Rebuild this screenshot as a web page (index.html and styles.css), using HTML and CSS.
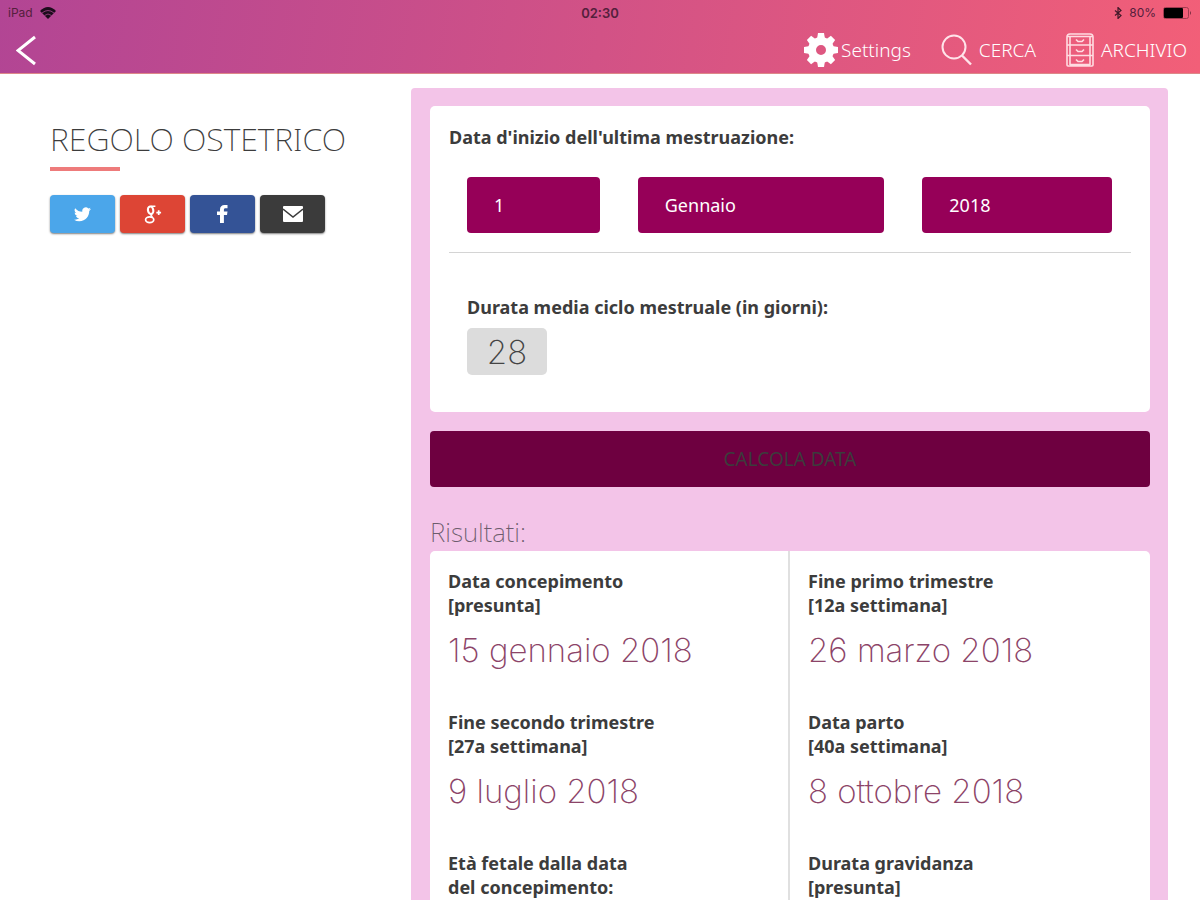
FILE: index.html
```html
<!DOCTYPE html>
<html lang="it">
<head>
    <meta charset="UTF-8">
    <meta name="viewport" content="width=device-width, initial-scale=1.0">
    <title>Regolo ostetrico</title>
    <link rel="stylesheet" href="styles.css">
</head>
<body>
    <header class="topbar">
        <div class="status">
            <div class="status-left">
                <span>iPad</span>
                <svg width="16" height="12" viewBox="0 0 16 12"><path d="M0 4Q8-4 16 4L8 12Z" fill="#1c0c1c"/><path d="M2 6Q8 1 14 6M4.500 8.500Q8 5.500 11.500 8.500" fill="none" stroke="#a8448c" stroke-width="0.800"/></svg>
            </div>
            <div class="status-time">02:30</div>
            <div class="status-right">
                <svg width="8" height="12" viewBox="0 0 8 12"><path d="M1 3.500L7 8.500L4 11.500V0.500L7 3.500L1 8.500" fill="none" stroke="#401828" stroke-width="1.200"/></svg>
                <span>80%</span>
                <svg width="29" height="12" viewBox="0 0 29 12"><rect x="0.500" y="0.500" width="25" height="11" rx="2" fill="none" stroke="#a03c50"/><rect x="1" y="1" width="19" height="10" rx="1" fill="#000"/><path d="M27 4V8Q29 6 27 4" fill="#7c2c40"/></svg>
            </div>
        </div>
        <nav class="nav">
            <a class="back" href="#" aria-label="Indietro">
                <svg width="22" height="32" viewBox="0 0 22 32"><path d="M19 3L2 16.500L19 30" fill="none" stroke="#fff" stroke-width="3"/></svg>
            </a>
            <a class="nav-link settings" href="#">
                <svg width="36" height="36" viewBox="-18 -18 36 36">
                    <circle r="9" fill="none" stroke="#fff" stroke-width="8"/>
                    <g fill="#fff">
                        <path id="tooth" d="M-4-11L-3-17H3L4-11Z"/>
                        <use href="#tooth" transform="rotate(45)"/>
                        <use href="#tooth" transform="rotate(90)"/>
                        <use href="#tooth" transform="rotate(135)"/>
                        <use href="#tooth" transform="rotate(180)"/>
                        <use href="#tooth" transform="rotate(225)"/>
                        <use href="#tooth" transform="rotate(270)"/>
                        <use href="#tooth" transform="rotate(315)"/>
                    </g>
                </svg>
                <span>Settings</span>
            </a>
            <a class="nav-link search" href="#">
                <svg width="31" height="32" viewBox="0 0 31 32"><circle cx="13" cy="13" r="11.500" fill="none" stroke="#ffe4ea" stroke-width="2"/><path d="M21 21.500L30 30.500" stroke="#ffe4ea" stroke-width="2.400"/></svg>
                <span>CERCA</span>
            </a>
            <a class="nav-link archive" href="#">
                <svg width="28" height="34" viewBox="0 0 28 34" fill="none" stroke="#ffdce2" stroke-width="1.600"><path d="M1 32V4Q1 1 4 1H24Q27 1 27 4V32Q27 33 26 33H2Q1 33 1 32ZM1 3.500H27M1 12H27M4 12V32M24 12V32M1 22.500H27M4 4V12M24 4V12M4 31.500H24M10 6.500L12 8.500H16L18 6.500M10 16.500L12 18.500H16L18 16.500M10 26.500L12 28.500H16L18 26.500"/></svg>
                <span>ARCHIVIO</span>
            </a>
        </nav>
    </header>

    <div class="page">
        <aside class="sidebar">
            <h1>REGOLO OSTETRICO</h1>
            <div class="share">
                <a class="twitter" href="#" aria-label="Twitter">
                    <svg width="17" height="15" viewBox="0 0 24 20"><path fill="#fff" d="M24 2.400a9.600 9.600 0 0 1-2.800.8A4.900 4.900 0 0 0 23.300.500a9.800 9.800 0 0 1-3.100 1.200 4.900 4.900 0 0 0-8.400 4.500A14 14 0 0 1 1.700 1a4.900 4.900 0 0 0 1.500 6.600A4.800 4.800 0 0 1 1 7v.1a4.900 4.900 0 0 0 3.900 4.800 4.900 4.900 0 0 1-2.200.1 4.900 4.900 0 0 0 4.600 3.400A9.900 9.900 0 0 1 0 17.400 13.900 13.900 0 0 0 7.500 19.600C16.600 19.600 21.500 12 21.500 5.500V4.900A10 10 0 0 0 24 2.400Z"/></svg>
                </a>
                <a class="google" href="#" aria-label="Google+">
                    <svg width="18" height="19" viewBox="0 0 18 20" fill="none" stroke="#fff"><ellipse cx="6.500" cy="5.500" rx="2.800" ry="4" stroke-width="2.200" transform="rotate(-12 6.500 5.500)"/><path d="M6.500 1.200H11.500M8 9.500Q5.500 11 8.500 12.400" stroke-width="1.600"/><ellipse cx="5.500" cy="15.500" rx="4.300" ry="3" stroke-width="1.800"/><path d="M12.500 8H17.500M15 5.500V10.500" stroke-width="1.800"/></svg>
                </a>
                <a class="facebook" href="#" aria-label="Facebook">
                    <svg width="11" height="18" viewBox="0 0 11 18"><path fill="#fff" d="M3 18V10H0V6.500H3V4.500C3 1.500 4.800 0 7.500 0H10.500V3.200H8.600C7.300 3.200 6.900 3.800 6.900 4.800V6.500H10.500L10 10H6.900V18Z"/></svg>
                </a>
                <a class="mail" href="#" aria-label="Email">
                    <svg width="20" height="16" viewBox="0 0 20 16"><rect width="20" height="16" rx="1" fill="#fff"/><path d="M0 3L10 11L20 3" fill="none" stroke="#3b3b3b" stroke-width="1.500"/></svg>
                </a>
            </div>
        </aside>

        <main class="panel">
            <form>
                <div class="card">
                    <h2>Data d'inizio dell'ultima mestruazione:</h2>
                    <div class="date-row">
                        <select aria-label="Giorno"><option>1</option></select>
                        <select aria-label="Mese"><option>Gennaio</option></select>
                        <select aria-label="Anno"><option>2018</option></select>
                    </div>
                    <div class="cycle">
                        <label for="cycle">Durata media ciclo mestruale (in giorni):</label>
                        <input type="text" id="cycle" name="cycle" value="28">
                    </div>
                </div>
                <button type="submit">CALCOLA DATA</button>
            </form>

            <h3>Risultati:</h3>
            <div class="results">
                <div class="column">
                    <div class="result">
                        <h4>Data concepimento<br>[presunta]</h4>
                        <p>15 gennaio 2018</p>
                    </div>
                    <div class="result">
                        <h4>Fine secondo trimestre<br>[27a settimana]</h4>
                        <p>9 luglio 2018</p>
                    </div>
                    <div class="result">
                        <h4>Età fetale dalla data<br>del concepimento:</h4>
                    </div>
                </div>
                <div class="column">
                    <div class="result">
                        <h4>Fine primo trimestre<br>[12a settimana]</h4>
                        <p>26 marzo 2018</p>
                    </div>
                    <div class="result">
                        <h4>Data parto<br>[40a settimana]</h4>
                        <p>8 ottobre 2018</p>
                    </div>
                    <div class="result">
                        <h4>Durata gravidanza<br>[presunta]</h4>
                    </div>
                </div>
            </div>
        </main>
    </div>
</body>
</html>
```
FILE: styles.css
```css
* {
    box-sizing: border-box;
}
body {
    display: flex;
    flex-direction: column;
    min-height: 100vh;
    margin: 0;
    font-family: "Noto Sans", "Open Sans", sans-serif;
    background-color: #fff;
    color: #3c3c3c;
}
h1, h2, h3, h4, p {
    margin: 0;
}
svg {
    display: block;
}
.topbar {
    height: 74px;
    background: linear-gradient(100deg, #b24594, #f25f78);
    border-bottom: 1px solid #d88;
}
.status {
    display: grid;
    grid-template-columns: 1fr auto 1fr;
    align-items: center;
    height: 25px;
    padding: 0 8px;
    font-family: Inter, sans-serif;
    font-size: 12px;
    color: #54203c;
}
.status-left, .status-right {
    display: flex;
    align-items: center;
    gap: 7px;
}
.status-right {
    justify-content: flex-end;
}
.status-time {
    font-size: 13px;
    font-weight: 600;
}
.nav {
    display: flex;
    align-items: center;
    height: 50px;
    padding: 0 13px 0 16px;
}
.back {
    margin-right: auto;
}
.nav-link {
    display: flex;
    align-items: center;
    gap: 7px;
    margin-left: 30px;
    font-size: 19px;
    font-weight: 300;
    color: #fff;
    text-decoration: none;
}
.settings {
    gap: 2px;
}
.page {
    display: flex;
    flex: 1;
    padding: 14px 32px 0 50px;
}
.sidebar {
    flex: 0 0 361px;
    padding-top: 28px;
}
h1 {
    font-size: 32px;
    font-weight: 250;
    line-height: 46px;
}
h1::after {
    content: "";
    display: block;
    width: 70px;
    height: 4px;
    margin-top: 5px;
    background-color: #ee7b7b;
}
.share {
    display: flex;
    gap: 5px;
    margin-top: 24px;
}
.share a {
    display: flex;
    align-items: center;
    justify-content: center;
    width: 65px;
    height: 38px;
    border-radius: 4px;
    box-shadow: 0 1px 2px rgba(0, 0, 0, 0.5);
}
.twitter {
    background-color: #4ba6ea;
}
.google {
    background-color: #dd4535;
}
.facebook {
    background-color: #345396;
}
.mail {
    background-color: #3b3b3b;
}
.panel {
    display: flex;
    flex-direction: column;
    flex: 1;
    padding: 18px 18px 0 19px;
    background-color: #f3c4e8;
    border-radius: 4px 4px 0 0;
}
.card {
    padding: 19px 19px 37px;
    background-color: #fff;
    border-radius: 5px;
}
h2, h4, label {
    font-size: 18px;
    font-weight: 700;
    line-height: 24px;
}
.date-row {
    display: grid;
    grid-template-columns: 133fr 247fr 190fr;
    gap: 38px;
    padding: 28px 19px 19px 18px;
    border-bottom: 1px solid #d4d4d4;
}
select {
    appearance: none;
    height: 56px;
    padding: 0 27px;
    border: none;
    border-radius: 4px;
    background-color: #960058;
    color: #fff;
    font-family: inherit;
    font-size: 18px;
}
.cycle {
    padding: 42px 18px 0;
}
label {
    display: block;
}
input {
    display: block;
    width: 80px;
    height: 47px;
    margin-top: 9px;
    padding: 0;
    border: none;
    border-radius: 5px;
    background-color: #dcdcdc;
    color: #444;
    font-family: Inter, sans-serif;
    font-size: 33px;
    font-weight: 200;
    text-align: center;
}
button {
    display: block;
    width: 100%;
    height: 56px;
    margin-top: 19px;
    border: none;
    border-radius: 4px;
    background-color: #6e0040;
    color: #3c3c3c;
    font-family: inherit;
    font-size: 19px;
}
h3 {
    margin-top: 26px;
    font-size: 26px;
    font-weight: 250;
    line-height: 38px;
    color: #6c5c6c;
}
.results {
    display: flex;
    flex: 1;
    background-color: #fff;
    border-radius: 5px 5px 0 0;
}
.column {
    width: 50%;
    padding: 18px 18px 0;
}
.column:first-child {
    border-right: 2px solid #e0e0e0;
}
.result p {
    padding: 14px 0 41px;
    font-family: Inter, sans-serif;
    font-size: 33px;
    font-weight: 150;
    line-height: 38px;
    color: #8c4468;
}
```
